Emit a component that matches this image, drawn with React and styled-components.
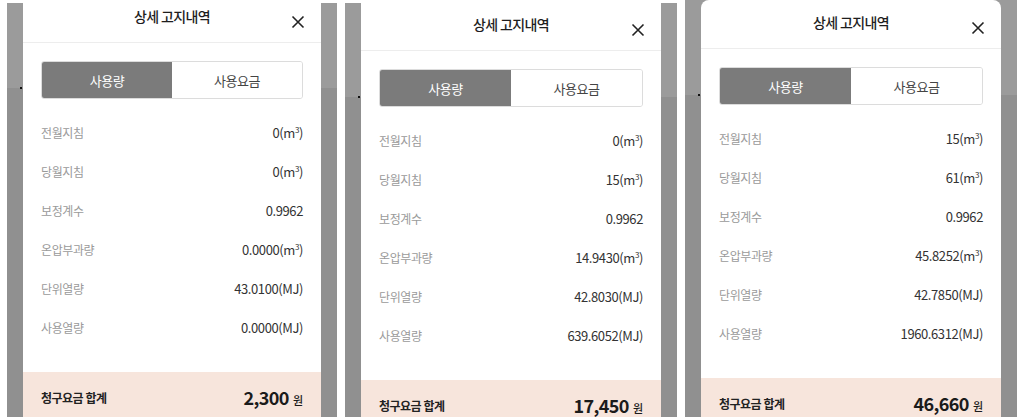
import React from 'react';
import styled, { createGlobalStyle } from 'styled-components';

const GlobalStyle = createGlobalStyle`
  html, body {
    margin: 0;
    padding: 0;
    background: #ffffff;
  }
  body {
    font-family: 'Noto Sans CJK KR', 'Noto Sans', sans-serif;
    color: #222;
  }
`;

export const Page = styled.div`
  display: flex;
  gap: 8px;
  padding-left: 7px;
  width: 1024px;
  height: 419px;
  box-sizing: border-box;
  overflow: hidden;
`;

// dimmed phone screen behind the modal
export const Screen = styled.div`
  position: relative;
  width: ${p => p.width}px;
  height: ${p => p.height}px;
  margin-top: ${p => p.top}px;
  padding: 0 16px;
  box-sizing: border-box;
  overflow: hidden;
  background: linear-gradient(
    to bottom,
    #9b9b9b 0,
    #9b9b9b ${p => p.band}px,
    #909090 ${p => p.band}px
  );
  &::before {
    content: '';
    position: absolute;
    left: 13px;
    top: ${p => p.band - 1}px;
    width: 2px;
    height: 2px;
    background: #111;
  }
`;

export const Modal = styled.div`
  margin-top: ${p => p.offset}px;
  background: #fff;
  border-radius: ${p => (p.rounded ? '8px 8px 0 0' : '0')};
`;

export const Header = styled.div`
  position: relative;
  height: 49px;
  box-sizing: border-box;
  border-bottom: 1px solid #ededed;
  display: flex;
  justify-content: center;
  padding-top: 12px;
`;

export const Title = styled.div`
  font-size: 14px;
  font-weight: 500;
  line-height: 20px;
  letter-spacing: -0.6px;
  color: #1e1e1e;
`;

export const Close = styled.button`
  position: absolute;
  right: 16px;
  top: 21px;
  width: 14px;
  height: 14px;
  padding: 0;
  border: 0;
  background: none;
  display: flex;
`;

export const Body = styled.div`
  padding: 18px 18px 25px;
`;

export const Tabs = styled.div`
  display: flex;
  height: 38px;
  border: 1px solid #dcdcdc;
  border-radius: 3px;
  box-sizing: border-box;
  overflow: hidden;
`;

export const Tab = styled.div`
  flex: 1;
  display: flex;
  align-items: center;
  justify-content: center;
  font-size: 13px;
  letter-spacing: -0.4px;
  background: ${p => (p.active ? '#7b7b7b' : '#fff')};
  color: ${p => (p.active ? '#fff' : '#444')};
`;

export const List = styled.div`
  padding-top: 14px;
`;

export const Row = styled.div`
  display: flex;
  align-items: center;
  justify-content: space-between;
  height: 39px;
`;

export const Label = styled.span`
  font-size: 12px;
  letter-spacing: -0.4px;
  color: #9a9a9a;
`;

export const Value = styled.span`
  font-size: 13px;
  letter-spacing: -0.4px;
  color: #333;
  sup {
    font-size: 8px;
    line-height: 0;
    vertical-align: 5px;
  }
`;

export const Footer = styled.div`
  display: flex;
  align-items: center;
  justify-content: space-between;
  background: #f7e5dc;
  padding: 12px 18px 30px;
`;

export const TotalLabel = styled.span`
  font-size: 12px;
  font-weight: 700;
  letter-spacing: -0.5px;
  color: #222;
`;

export const Total = styled.span`
  display: flex;
  align-items: baseline;
  gap: 4px;
  font-size: 18px;
  font-weight: 700;
  letter-spacing: -0.6px;
  color: #1b1b1b;
  small {
    font-size: 11px;
    font-weight: 500;
    letter-spacing: 0;
  }
`;

const labels = ['전월지침', '당월지침', '보정계수', '온압부과량', '단위열량', '사용열량'];

const M3 = ({ n }) => (
  <>
    {n}(m<sup>3</sup>)
  </>
);

const screens = [
  {
    width: 330, height: 414, top: 3, band: 85, offset: -9, rounded: false,
    values: [<M3 n="0" />, <M3 n="0" />, '0.9962', <M3 n="0.0000" />, '43.0100(MJ)', '0.0000(MJ)'],
    total: '2,300'
  },
  {
    width: 332, height: 414, top: 3, band: 94, offset: -1, rounded: false,
    values: [<M3 n="0" />, <M3 n="15" />, '0.9962', <M3 n="14.9430" />, '42.8030(MJ)', '639.6052(MJ)'],
    total: '17,450'
  },
  {
    width: 332, height: 417, top: 0, band: 95, offset: 0, rounded: true,
    values: [<M3 n="15" />, <M3 n="61" />, '0.9962', <M3 n="45.8252" />, '42.7850(MJ)', '1960.6312(MJ)'],
    total: '46,660'
  }
];

const CloseIcon = () => (
  <svg width="14" height="14" viewBox="0 0 14 14">
    <path d="M1.5 1.5 L12.5 12.5 M12.5 1.5 L1.5 12.5" stroke="#222" strokeWidth="1.6" />
  </svg>
);

const Detail = ({ s }) => (
  <Screen width={s.width} height={s.height} top={s.top} band={s.band}>
    <Modal offset={s.offset} rounded={s.rounded}>
      <Header>
        <Title>상세 고지내역</Title>
        <Close aria-label="닫기">
          <CloseIcon />
        </Close>
      </Header>
      <Body>
        <Tabs>
          <Tab active>사용량</Tab>
          <Tab>사용요금</Tab>
        </Tabs>
        <List>
          {labels.map((l, i) => (
            <Row key={l}>
              <Label>{l}</Label>
              <Value>{s.values[i]}</Value>
            </Row>
          ))}
        </List>
      </Body>
      <Footer>
        <TotalLabel>청구요금 합계</TotalLabel>
        <Total>
          {s.total}
          <small>원</small>
        </Total>
      </Footer>
    </Modal>
  </Screen>
);

const App = () => (
  <>
    <GlobalStyle />
    <Page>
      {screens.map(s => (
        <Detail key={s.total} s={s} />
      ))}
    </Page>
  </>
);

export default App;
